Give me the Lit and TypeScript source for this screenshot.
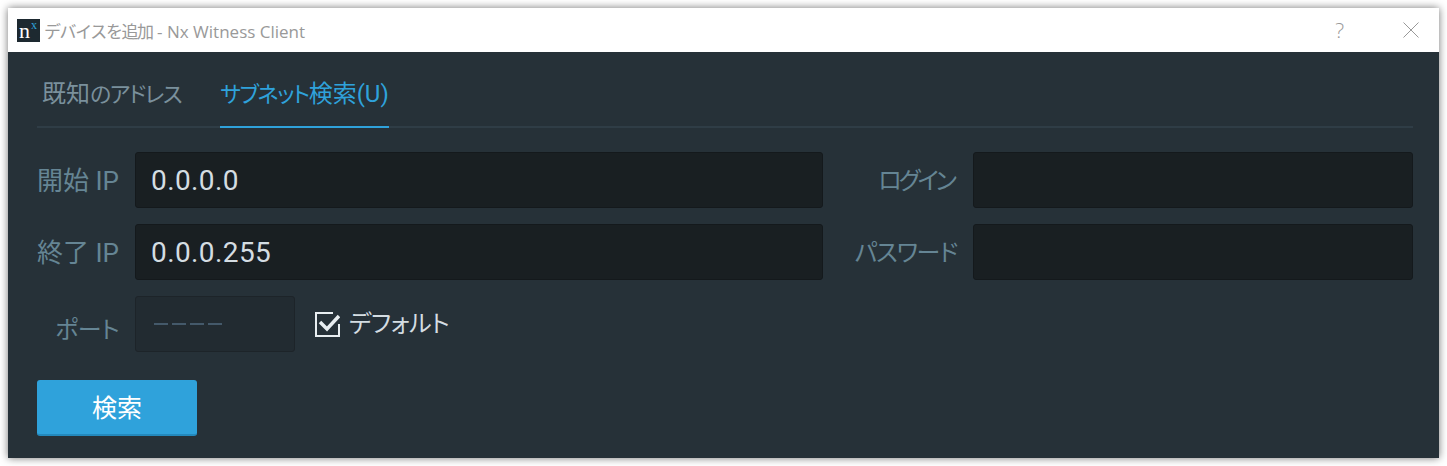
import { LitElement, html, css } from "lit";
import { customElement } from "lit/decorators.js";

@customElement("app-root")
export class AppRoot extends LitElement {
  static styles = css`
    :host { display: block; width: 1447px; height: 466px; box-sizing: border-box; padding: 8px; background: #fff; font-family: Roboto, "Noto Sans CJK JP", sans-serif; font-feature-settings: "palt"; }
    .win { width: 1431px; height: 450px; display: flex; flex-direction: column; box-shadow: 0 0 8px rgba(0,0,0,.55); }
    .title { height: 44px; flex: none; background: #fff; display: flex; align-items: center; padding: 0 17px 0 9px; }
    .logo { width: 23px; height: 23px; flex: none; display: block; margin-right: 4px; }
    .title-text { font: 17px "Open Sans", "Noto Sans CJK JP", sans-serif; color: #999; flex: 1; white-space: nowrap; }
    .title-text .jp { letter-spacing: -1.4px; }
    .help { font: 300 21px "Open Sans", sans-serif; color: #999; margin-right: 59px; }
    .close { width: 16px; height: 16px; display: block; margin-right: 3px; }
    .body { flex: 1; background: #263138; padding: 0 26px 0 29px; display: flex; flex-direction: column; }
    .tabs { height: 76px; flex: none; display: flex; gap: 39px; border-bottom: 2px solid #2f3d46; box-sizing: border-box; }
    .tab { font-size: 24px; line-height: 84px; height: 76px; box-sizing: border-box; color: #7a909c; padding: 0 0 0 5px; white-space: nowrap; }
    .tab.on { color: #2fa2db; border-bottom: 2px solid #2fa2db; padding: 0; }
    .kana { font-size: 22px; letter-spacing: -1.4px; }
    .form { display: grid; grid-template-columns: 82px 688px 118px 440px; column-gap: 16px; row-gap: 16px; margin-top: 24px; width: 1376px; }
    label { font-size: 24px; line-height: 58px; height: 56px; color: #658594; text-align: right; white-space: nowrap; }
    label.ip { font-size: 26px; }
    label.login { letter-spacing: -3px; padding-right: 3px; }
    label.pw { letter-spacing: -1.2px; }
    .field { height: 56px; box-sizing: border-box; border-radius: 3px; background: #191f22; border: 1px solid #14191c; font-size: 28px; line-height: 56px; color: #d4dde2; padding-left: 15px; letter-spacing: .4px; }
    .port-row { grid-column: 2 / 5; display: flex; align-items: center; }
    .port { width: 160px; height: 56px; flex: none; box-sizing: border-box; border-radius: 3px; background: #222b31; border: 1px solid #1d2429; display: flex; align-items: center; gap: 4px; padding: 0 0 0 18px; }
    .dash { width: 14px; height: 2px; background: #44596a; }
    .check { width: 25px; height: 25px; display: block; margin: 0 9px 0 20px; flex: none; }
    .def { font-size: 24px; color: #d4dde2; margin-top: -5px; letter-spacing: -.4px; }
    label.lab-port { line-height: 68px; letter-spacing: -.5px; }
    .btn { width: 160px; height: 56px; margin-top: 28px; flex: none; box-sizing: border-box; border-radius: 3px; background: #2fa2db; border-bottom: 2px solid #2389bd; color: #fff; font-size: 25px; text-align: center; line-height: 58px; }
  `;

  render() {
    return html`
      <div class="win">
        <div class="title">
          <svg class="logo" viewBox="0 0 23 23">
            <rect width="23" height="23" fill="#1d2930"/>
            <text x="2" y="19" font-family="Liberation Serif" font-size="22" fill="#fff">n</text>
            <text x="14" y="10" font-family="Liberation Serif" font-size="12" fill="#2fa2db">x</text>
          </svg>
          <span class="title-text"><span class="jp">デバイスを追加</span> - Nx Witness Client</span>
          <span class="help">?</span>
          <svg class="close" viewBox="0 0 16 16"><path d="M.5.5l15 15M15.5.5l-15 15" stroke="#999" stroke-width="1" fill="none"/></svg>
        </div>
        <div class="body">
          <div class="tabs">
            <div class="tab">既知<span class="kana">のアドレス</span></div>
            <div class="tab on"><span class="kana">サブネット</span>検索(U)</div>
          </div>
          <div class="form">
            <label class="ip">開始 IP</label>
            <div class="field">0.0.0.0</div>
            <label class="login">ログイン</label>
            <div class="field"></div>
            <label class="ip">終了 IP</label>
            <div class="field">0.0.0.255</div>
            <label class="pw">パスワード</label>
            <div class="field"></div>
            <label class="lab-port">ポート</label>
            <div class="port-row">
              <div class="port"><i class="dash"></i><i class="dash"></i><i class="dash"></i><i class="dash"></i></div>
              <svg class="check" viewBox="0 0 25 25">
                <path d="M18 1H1v23h23V12" stroke="#e8eef1" stroke-width="2" fill="none"/>
                <path d="M5 10l7 7L24 4" stroke="#e8eef1" stroke-width="3.5" fill="none"/>
              </svg>
              <span class="def">デフォルト</span>
            </div>
          </div>
          <div class="btn">検索</div>
        </div>
      </div>
    `;
  }
}
